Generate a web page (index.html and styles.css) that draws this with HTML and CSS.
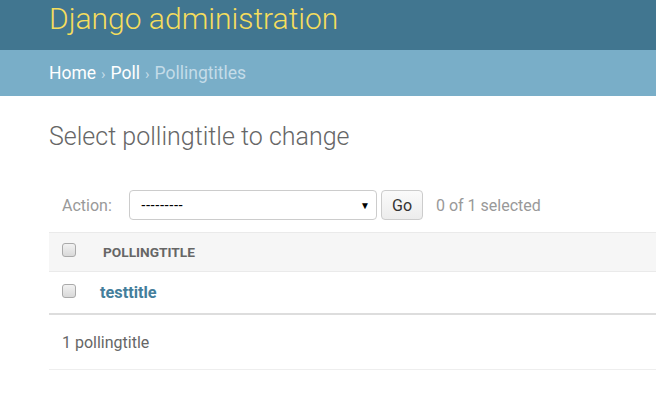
FILE: index.html
```html
<!DOCTYPE html>
<html>
<head>
<meta charset="utf-8">
<link rel="stylesheet" href="styles.css">
</head>
<body>
<div class="header"><h1 class="brand">Django administration</h1></div>
<div class="breadcrumbs"><a class="crumb">Home</a><span class="sep">›</span><a class="crumb">Poll</a><span class="sep">›</span><span class="current">Pollingtitles</span></div>
<div class="content">
  <h1 class="title">Select pollingtitle to change</h1>
  <div class="actions">
    <span class="label">Action:</span>
    <div class="selectbox"><span class="dashes">---------</span><span class="arrow">▼</span></div>
    <button class="go">Go</button>
    <span class="counter">0 of 1 selected</span>
  </div>
  <div class="table">
    <div class="thead">
      <span class="cb"></span>
      <span class="th">POLLINGTITLE</span>
    </div>
    <div class="row">
      <span class="cb"></span>
      <a class="link">testtitle</a>
    </div>
  </div>
  <div class="paginator">1 pollingtitle</div>
</div>
</body>
</html>
```
FILE: styles.css
```css
html, body { margin: 0; padding: 0; }
body {
  font-family: Roboto, "Liberation Sans", sans-serif;
  background: #fff;
  width: 656px;
  overflow: hidden;
}
.header {
  height: 50px;
  background: #417690;
  padding-left: 49px;
  box-sizing: border-box;
}
.brand {
  margin: 0;
  font-size: 30px;
  font-weight: 300;
  line-height: 38px;
  color: #f5dd5d;
}
.breadcrumbs {
  height: 46px;
  background: #79aec8;
  padding-left: 49px;
  box-sizing: border-box;
  font-size: 17.5px;
  line-height: 46px;
  color: #c4dce8;
}
.crumb { color: #fff; }
.sep { margin: 0 5px; font-size: 15px; }
.current { color: #c4dce8; }
.content { padding-left: 49px; }
.title {
  margin: 0;
  padding-top: 26px;
  font-size: 25px;
  font-weight: 300;
  line-height: 30px;
  color: #666;
}
.actions {
  display: flex;
  align-items: center;
  margin-top: 38px;
  padding-left: 13px;
  height: 30px;
  color: #999;
  font-size: 16px;
}
.label { width: 67px; }
.selectbox {
  width: 248px;
  height: 30px;
  box-sizing: border-box;
  border: 1px solid #ccc;
  border-radius: 4px;
  display: flex;
  align-items: center;
  justify-content: space-between;
  padding: 0 6px 0 11px;
  color: #000;
  font-family: "Liberation Sans", Arial, sans-serif;
  font-size: 14px;
}
.arrow { font-size: 10px; }
.go {
  margin-left: 4px;
  width: 42px;
  height: 30px;
  border: 1px solid #ccc;
  border-radius: 4px;
  background: linear-gradient(#fafafa, #ececec);
  font-family: Roboto, sans-serif;
  font-size: 16px;
  color: #333;
  padding: 0;
}
.counter { margin-left: 13px; }
.table { margin-top: 12px; }
.thead {
  height: 40px;
  box-sizing: border-box;
  border-top: 1px solid #eaeaea;
  border-bottom: 1px solid #eaeaea;
  background: #f6f6f6;
  display: flex;
  align-items: center;
  padding-left: 13px;
}
.row {
  height: 43px;
  box-sizing: border-box;
  border-bottom: 2px solid #ddd;
  display: flex;
  align-items: center;
  padding-left: 13px;
}
.cb {
  width: 12px;
  height: 12px;
  border: 1px solid #aaa;
  border-radius: 3px;
  background: linear-gradient(#f2f2f2, #d9d9d9);
  margin-top: -4px;
}
.th {
  margin-left: 27px;
  font-size: 13.7px;
  font-weight: 700;
  color: #666;
}
.link {
  margin-left: 24px;
  font-size: 16.3px;
  font-weight: 700;
  color: #447e9b;
}
.paginator {
  height: 55px;
  box-sizing: border-box;
  border-bottom: 1px solid #eee;
  padding-left: 13px;
  line-height: 55px;
  font-size: 16px;
  color: #666;
}
```
